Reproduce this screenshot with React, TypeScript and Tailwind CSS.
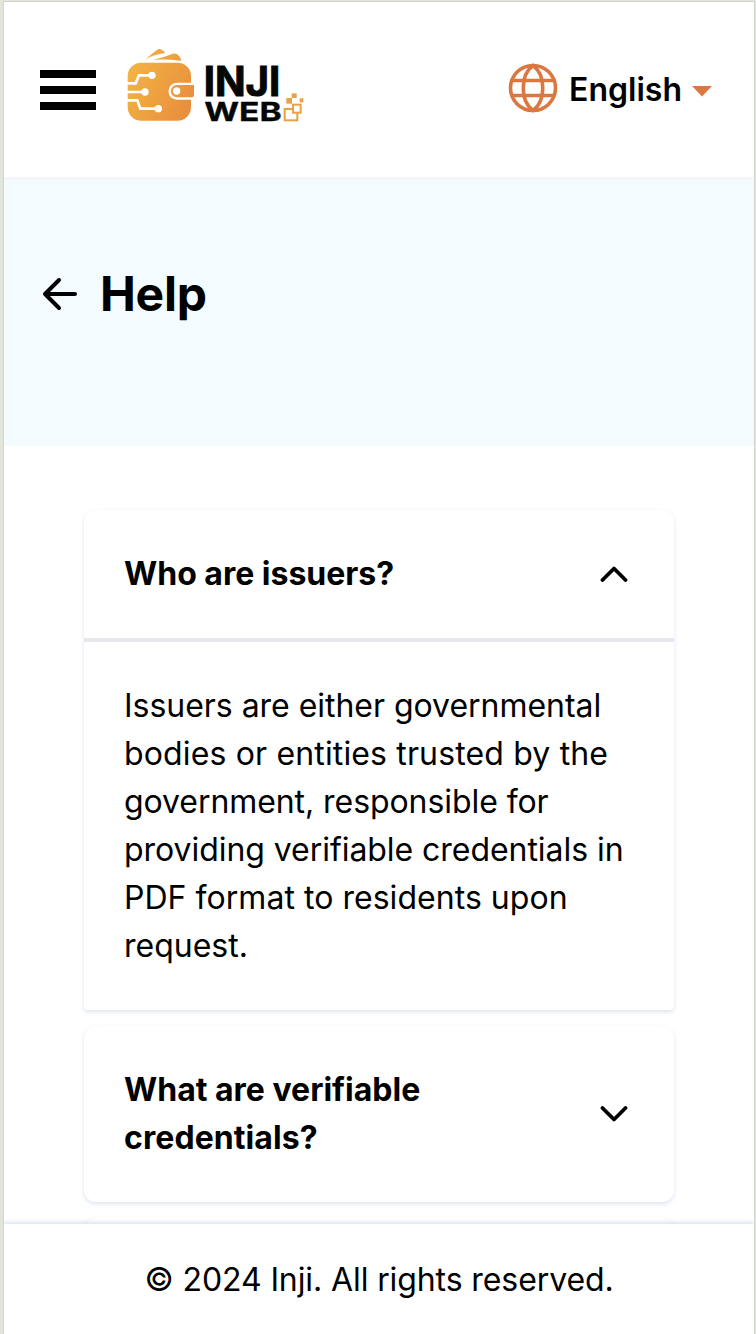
import React from "react";

function Logo() {
  return (
    <svg width="210" height="95" viewBox="0 0 630 285" className="block shrink-0" role="img" aria-label="Inji Web">
      <defs>
        <linearGradient id="amber" x1="52" y1="80" x2="252" y2="180" gradientUnits="userSpaceOnUse">
          <stop offset="0" stopColor="#f3b544" />
          <stop offset="1" stopColor="#e88e3d" />
        </linearGradient>
      </defs>
      <path d="M106 58 L140 30 Q147 25 155 29 Q162 33 166 39 Q132 43 106 58Z" fill="url(#amber)" />
      <path d="M130 59 Q160 53 188 41 Q204 37 213 58 L213 62 Q170 57 130 59Z" fill="url(#amber)" />
      <rect x="53" y="68" width="190" height="174" rx="40" fill="url(#amber)" />
      <g fill="none" stroke="#fff" strokeWidth="8">
        <path d="M50 130H77L87 106H121M50 156H98M50 181H82L91 206H140" />
      </g>
      <g fill="#fff">
        <circle cx="126" cy="106" r="11" />
        <circle cx="105" cy="156" r="11" />
        <circle cx="145" cy="206" r="11" />
      </g>
      <path d="M256 128H201A25 25 0 0 0 201 179H256Z" fill="#fff" />
      <path d="M252 135H201A18.500 18.500 0 0 0 201 172H244Q252 172 252 165Z" fill="url(#amber)" />
      <circle cx="200" cy="153" r="11" fill="#fff" />
      <g fill="#050706" stroke="#050706" className="font-['Inter'] font-bold">
        <text x="281" y="167" fontSize="121" strokeWidth="3" textLength="230" lengthAdjust="spacingAndGlyphs">INJI</text>
        <text x="283" y="242" fontSize="79" strokeWidth="1" textLength="232" lengthAdjust="spacingAndGlyphs">WEB</text>
      </g>
      <g fill="#eba044">
        <rect x="529" y="174" width="17" height="17" />
        <rect x="545" y="160" width="15" height="14" />
        <rect x="569" y="175" width="11" height="12" />
      </g>
      <g fill="#fff" stroke="#eba044" strokeWidth="6">
        <rect x="524" y="207" width="38" height="34" />
        <rect x="549" y="194" width="23" height="24" />
      </g>
    </svg>
  );
}

function Globe() {
  return (
    <svg width="50" height="50" viewBox="0 0 50 50" fill="none" stroke="#db7842" strokeWidth="3.600" className="block shrink-0">
      <circle cx="25" cy="25" r="22.500" />
      <path d="M25 2.500C12 12 12 38 25 47.500C38 38 38 12 25 2.500Z" />
      <path d="M3.500 17.500H46.500M3.500 32.500H46.500" />
    </svg>
  );
}

function Chevron({ up = false }: { up?: boolean }) {
  return (
    <svg width="28" height="16" viewBox="0 0 28 16" fill="none" stroke="#000" strokeWidth="3.800" strokeLinecap="round" strokeLinejoin="round" className="mr-[6px] block shrink-0">
      <path d={up ? "M2.500 14L14 2.500L25.500 14" : "M2.500 2L14 13.500L25.500 2"} />
    </svg>
  );
}

function Header() {
  return (
    <header className="flex h-[177px] shrink-0 items-start bg-white pl-9">
      <button aria-label="Menu" className="mt-[68px] flex w-14 shrink-0 flex-col gap-2">
        <span className="h-2 w-full bg-black" />
        <span className="h-2 w-full bg-black" />
        <span className="h-2 w-full bg-black" />
      </button>
      <div className="mt-[38px] ml-[14px]">
        <Logo />
      </div>
      <button className="mt-[61px] mr-[42px] ml-auto flex h-[50px] items-center">
        <Globe />
        <span className="mt-[3px] ml-[11px] text-[32px] leading-[48px] font-semibold">English</span>
        <svg width="20" height="11" viewBox="0 0 20 11" className="mt-[7px] ml-[10px] block">
          <path d="M0 0H20L10 10.500Z" fill="#db7842" />
        </svg>
      </button>
    </header>
  );
}

const cardShadow = "shadow-[0_2px_4px_rgba(30,70,160,0.15)]";

export default function App() {
  return (
    <div className="h-[1334px] w-[756px] overflow-hidden bg-[#e1e5da] pt-px pr-px pl-[3px] font-['Inter',sans-serif] text-black">
      <div className="flex h-full flex-col overflow-hidden border-t border-r border-l border-[#d2d4cf] bg-white">
        <Header />
        <section className="flex h-[267px] shrink-0 items-start bg-[#f3fbff] pt-[79px] pl-[38px] shadow-[0_-1px_2px_rgba(30,60,140,0.10)]">
          <svg width="36" height="34" viewBox="0 0 36 34" fill="none" stroke="#000" strokeWidth="4" strokeLinecap="round" strokeLinejoin="round" className="mt-[19px] block">
            <path d="M17 3L3 17L17 31M3 17H33" />
          </svg>
          <h1 className="ml-[22px] text-[48px] leading-[72px] font-bold tracking-[-0.25px]">Help</h1>
        </section>
        <main className="min-h-0 flex-1 overflow-hidden bg-white px-20 pt-16">
          <div className="flex flex-col gap-4">
            <article className={`h-[500px] shrink-0 rounded-t-xl rounded-b-[4px] bg-white ${cardShadow}`}>
              <div className="flex h-[128px] items-center justify-between px-10">
                <h2 className="text-[32px] leading-[48px] font-bold">Who are issuers?</h2>
                <Chevron up />
              </div>
              <p className="border-t-4 border-[#e5e7eb] px-10 pt-10 text-[32px] leading-[48px]">
                <span className="tracking-[-0.03px]">Issuers are either governmental</span><br />
                <span className="tracking-[0.15px]">bodies or entities trusted by the</span><br />
                <span className="tracking-[-0.07px]">government, responsible for</span><br />
                <span className="tracking-[-0.05px]">providing verifiable credentials in</span><br />
                <span className="tracking-[0.04px]">PDF format to residents upon</span><br />
                request.
              </p>
            </article>
            <article className={`flex h-44 shrink-0 items-center justify-between rounded-xl bg-white px-10 ${cardShadow}`}>
              <h2 className="text-[32px] leading-[48px] font-bold">What are verifiable<br /><span className="tracking-[0.08px]">credentials?</span></h2>
              <Chevron />
            </article>
            <article className={`h-32 shrink-0 rounded-xl bg-white ${cardShadow}`} />
          </div>
        </main>
        <footer className="z-10 flex h-[110px] shrink-0 items-center justify-center bg-white pt-[2px] text-[32px] leading-[48px] tracking-[-0.1px] shadow-[0_-2px_4px_rgba(30,70,160,0.15)]">
          © 2024 Inji. All rights reserved.
        </footer>
      </div>
    </div>
  );
}
